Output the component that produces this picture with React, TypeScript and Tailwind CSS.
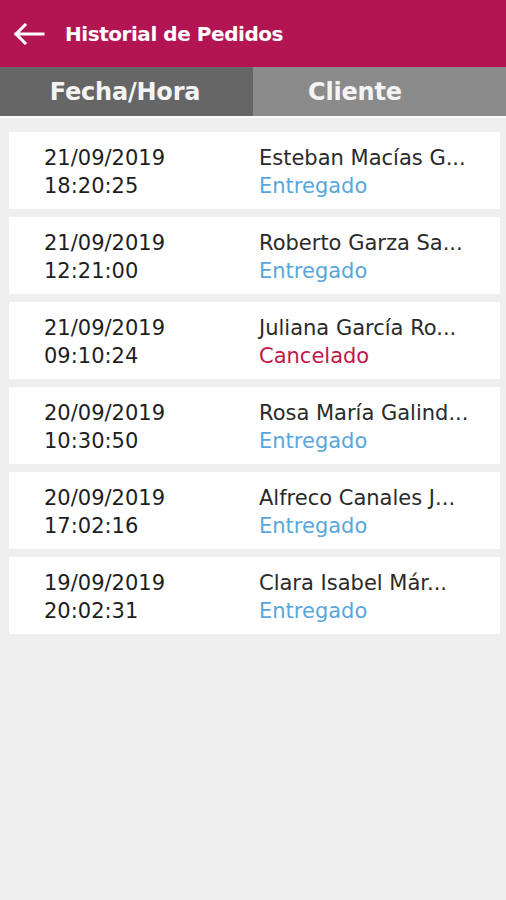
import React from "react";

const rows = [
  { date: "21/09/2019", time: "18:20:25", name: "Esteban Macías G...", status: "Entregado" },
  { date: "21/09/2019", time: "12:21:00", name: "Roberto Garza Sa...", status: "Entregado" },
  { date: "21/09/2019", time: "09:10:24", name: "Juliana García Ro...", status: "Cancelado" },
  { date: "20/09/2019", time: "10:30:50", name: "Rosa María Galind...", status: "Entregado" },
  { date: "20/09/2019", time: "17:02:16", name: "Alfreco Canales J...", status: "Entregado" },
  { date: "19/09/2019", time: "20:02:31", name: "Clara Isabel Már...", status: "Entregado" },
];

export default function App() {
  return (
    <div
      className="w-[506px] h-[900px] bg-[#efefef] flex flex-col"
      style={{ fontFamily: '"DejaVu Sans", Verdana, sans-serif' }}
    >
      <div className="h-[67px] bg-[#b31552] flex items-center shrink-0">
        <svg width="32" height="22" viewBox="0 0 32 22" className="ml-[13px]">
          <path d="M30 11H3M12 2L3 11L12 20" fill="none" stroke="white" strokeWidth="3" strokeLinecap="square" />
        </svg>
        <span className="ml-[20px] text-white font-bold text-[20px] tracking-[-0.45px]">Historial de Pedidos</span>
      </div>
      <div className="flex h-[49px] shrink-0">
        <div className="w-[253px] bg-[#666666] flex items-center justify-center text-[#f4f4f4] text-[24px] font-bold tracking-[-0.2px] pr-[3px]">
          Fecha/Hora
        </div>
        <div className="flex-1 bg-[#8b8b8b] flex items-center text-[#f4f4f4] text-[24px] font-bold tracking-[-0.2px] pl-[55px]">
          Cliente
        </div>
      </div>
      <div className="h-[2px] bg-[#fafafa] shrink-0" />
      <div className="flex flex-col gap-[8px] px-[9px] pr-[6px] pt-[14px]">
        {rows.map((r, i) => (
          <div key={i} className="bg-white h-[77px] flex items-center text-[21px] leading-[28px] pt-[3px]">
            <div className="w-[250px] pl-[35px] text-[#1e1e1e]">
              <div>{r.date}</div>
              <div>{r.time}</div>
            </div>
            <div className="flex-1 whitespace-nowrap">
              <div className="text-[#2a2a2a]">{r.name}</div>
              <div className={r.status === "Cancelado" ? "text-[#c0184a]" : "text-[#5aa6dc]"}>{r.status}</div>
            </div>
          </div>
        ))}
      </div>
    </div>
  );
}
